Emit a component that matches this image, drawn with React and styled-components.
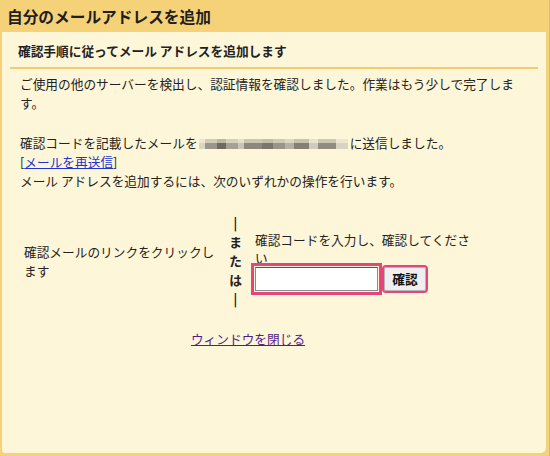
import React from "react";
import styled, { createGlobalStyle } from "styled-components";

const GlobalStyle = createGlobalStyle`
  html, body {
    margin: 0;
    padding: 0;
    background: #f5d178;
  }
  body {
    font-family: "Noto Sans CJK JP", "Noto Sans", sans-serif;
    color: #222;
  }
`;

const Window = styled.div`
  width: 550px;
  height: 456px;
  box-sizing: border-box;
  background: #f5d178;
  border-right: 1px solid #c9bd9a;
  padding: 0 3px 3px 2px;
  display: flex;
  flex-direction: column;
`;

const Header = styled.div`
  height: 32px;
  display: flex;
  align-items: center;
  padding-left: 5px;
  font-size: 15.7px;
  font-weight: 700;
  color: #1e1e1e;
`;

const Panel = styled.div`
  flex: 1;
  background: #fef6d8;
  border-radius: 0 0 5px 3px;
  padding: 0 8px;
`;

const SubHeader = styled.div`
  padding: 9px 8px 0;
  font-size: 12.7px;
  line-height: 19px;
  font-weight: 700;
`;

const Rule = styled.div`
  height: 2px;
  margin-top: 7px;
  background: #f2cd6d;
`;

const Body = styled.div`
  padding: 0 18px 0 10px;
  font-size: 12.7px;
  line-height: 19px;
`;

const Para = styled.p`
  margin: ${(p) => p.$top}px 0 0;
`;

const Blur = styled.span`
  display: inline-block;
  width: 149px;
  height: 10px;
  margin: 0 2px 0 1px;
  vertical-align: -1px;
  background:
    linear-gradient(to bottom, rgba(254, 246, 216, 0.55) 0 35%, transparent 35% 100%),
    linear-gradient(
      90deg,
      #d9d5c6 0 4%,
      #9b968b 4% 12%,
      #6f6a61 12% 18%,
      #a6a196 18% 26%,
      #c9c5b6 26% 30%,
      #8d887e 30% 42%,
      #7b766d 42% 50%,
      #9a958a 50% 58%,
      #b5b1a4 58% 64%,
      #858076 64% 74%,
      #d0ccbd 74% 80%,
      #918c82 80% 92%,
      #d8d4c5 92% 100%
    );
`;

const Link = styled.a`
  color: ${(p) => (p.$visited ? "#551a8b" : "#1a35d0")};
  text-decoration: underline;
  cursor: pointer;
`;

const Choices = styled.div`
  width: 456px;
  margin-top: 23px;
`;

const ChoiceGrid = styled.div`
  display: grid;
  grid-template-columns: 200px 31px 225px;
  align-items: center;
`;

const Cell = styled.div`
  padding: 0 4px;
  line-height: ${(p) => p.$lh || 19}px;
`;

const OrColumn = styled.div`
  display: flex;
  flex-direction: column;
  align-items: center;
  font-weight: 700;
  line-height: 19px;
`;

const InputRow = styled.div`
  display: flex;
  align-items: center;
  gap: 6px;
`;

const CodeInput = styled.input`
  width: 123px;
  height: 24px;
  box-sizing: border-box;
  margin: 0;
  border: 1px solid #8a8a8a;
  border-top-color: #555;
  background: #fff;
  outline: 3px solid #e5457a;
  outline-offset: 1px;
`;

const ConfirmButton = styled.button`
  width: 42px;
  height: 24px;
  box-sizing: border-box;
  padding: 0;
  margin: 0;
  border: 1px solid #b5b5b5;
  border-radius: 2px;
  background: #efefef;
  font-family: inherit;
  font-size: 12.7px;
  font-weight: 700;
  color: #111;
  outline: 2px solid #e5457a;
`;

const CloseRow = styled.div`
  margin-top: 21px;
  text-align: center;
  line-height: 19px;
`;

export default function App() {
  return (
    <>
      <GlobalStyle />
      <Window>
        <Header>自分のメールアドレスを追加</Header>
        <Panel>
          <SubHeader>確認手順に従ってメール アドレスを追加します</SubHeader>
          <Rule />
          <Body>
            <Para $top={5}>
              ご使用の他のサーバーを検出し、認証情報を確認しました。作業はもう少しで完了します。
            </Para>
            <Para $top={21}>
              確認コードを記載したメールを
              <Blur />
              に送信しました。
              <br />[<Link>メールを再送信</Link>]
              <br />
              メール アドレスを追加するには、次のいずれかの操作を行います。
            </Para>
            <Choices>
              <ChoiceGrid>
                <Cell>確認メールのリンクをクリックします</Cell>
                <OrColumn>
                  <span>|</span>
                  <span>ま</span>
                  <span>た</span>
                  <span>は</span>
                  <span>|</span>
                </OrColumn>
                <Cell $lh={18}>
                  確認コードを入力し、確認してください
                  <InputRow>
                    <CodeInput type="text" />
                    <ConfirmButton>確認</ConfirmButton>
                  </InputRow>
                </Cell>
              </ChoiceGrid>
              <CloseRow>
                <Link $visited>ウィンドウを閉じる</Link>
              </CloseRow>
            </Choices>
          </Body>
        </Panel>
      </Window>
    </>
  );
}
